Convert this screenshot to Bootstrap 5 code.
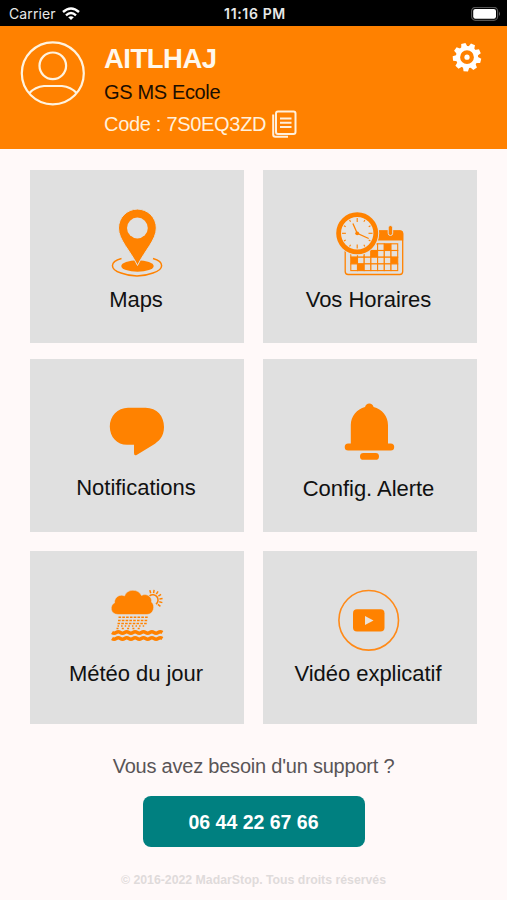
<!DOCTYPE html>
<html lang="fr">
<head>
<meta charset="utf-8">
<meta name="viewport" content="width=device-width, initial-scale=1">
<title>MadarStop</title>
<link href="https://cdn.jsdelivr.net/npm/bootstrap@5.3.0/dist/css/bootstrap.min.css" rel="stylesheet">
<style>
body{background:#fff9f9;font-family:"Liberation Sans",Arial,sans-serif;color:#111;min-height:900px;overflow:hidden}
svg{display:block;flex:none}
.status{height:26px;background:#000;color:#e8e8e8;font:14px/26px Inter,sans-serif;display:grid;grid-template-columns:1fr auto 1fr;padding:1px 6px 0 9px}
.status .carrier{letter-spacing:.1px}
.status .clock{font-weight:600;font-size:14px;letter-spacing:.65px}
.app-header{height:123px;background:#ff8100;padding:15px 25px 0 20px}
.app-header .who{margin-left:18px}
.app-header h1{font-size:27.5px;line-height:34px;font-weight:700;margin:1px 0 0;color:#fff8ec;letter-spacing:-.5px}
.school{font-size:20px;line-height:32px;color:#1c0e00;letter-spacing:-.35px}
.code{font-size:20px;line-height:32px;color:#fff0dc;letter-spacing:-.3px}
.tiles{display:grid;grid-template-columns:214px 214px;grid-template-rows:173px 173px 173px;column-gap:18.5px;row-gap:16px;padding:21px 0 0 30px}
.tile{background:#e0e0e0;padding-top:35px;color:#111}
.tile-label{font-size:22px;line-height:24px;margin-top:8px;margin-left:-2px;white-space:nowrap;letter-spacing:-.03px}
.r3{margin-top:3px;margin-bottom:-3px}
.r3 .tile-label{margin-top:1px}
.r2 .tile-label{margin-top:7px}
.help{font-size:20px;line-height:26px;color:#595557;margin-top:32px;letter-spacing:-.22px}
.phone{width:222px;height:51px;margin-top:17px;background:#008080;color:#fff;border-radius:8px;font-weight:700;font-size:19.5px;border:0;padding-top:8px}
.copyright{font-size:12.3px;line-height:16px;font-weight:700;color:#dfdbdb;margin-top:25px}
</style>
</head>
<body>
<div class="status">
  <div class="d-flex align-items-center"><span class="carrier">Carrier</span>
    <svg style="margin-left:6px" width="18" height="14" viewBox="0 0 18 14" fill="none" stroke="#fff" stroke-width="2.4"><path d="M1 5Q9-2 17 5M4 8.3Q9 3.8 14 8.3"/><path d="M9 13 6.2 10.3Q9 8 11.8 10.3Z" fill="#fff" stroke="none"/></svg>
  </div>
  <span class="clock">11:16 PM</span>
  <div class="d-flex justify-content-end align-items-center">
    <svg width="30" height="15" viewBox="0 0 30 15"><rect x=".6" y=".3" width="26" height="13" rx="3.8" fill="none" stroke="#555" stroke-width="1.2"/><rect x="2.2" y="1.9" width="22.8" height="9.8" rx="2.2" fill="#fff"/><path d="M28 4.5q2 2.3 0 4.6z" fill="#666"/></svg>
  </div>
</div>
<header class="app-header d-flex align-items-start">
  <svg width="66" height="66" viewBox="0 0 66 66" fill="none" stroke="#fff3df" stroke-width="2.2"><circle cx="32.800" cy="32.300" r="31"/><circle cx="32.800" cy="24.800" r="13.300"/><path d="M9.500 52Q15 46 24 45H42Q51 46 56.500 52"/></svg>
  <div class="who flex-grow-1">
    <h1>AITLHAJ</h1>
    <div class="school">GS MS Ecole</div>
    <div class="code d-flex align-items-center"><span>Code : 7S0EQ3ZD</span>
      <svg style="margin-left:6px" width="25" height="28" viewBox="0 0 25 28" fill="none" stroke="#fff0dc" stroke-width="2"><rect x="4" y="1.5" width="19.5" height="22.5" rx="2"/><path d="M1.2 4.5V24.500q0 2.200 2.200 2.200H16M8 8.500H19.500M8 12.700H19.500M8 16.900H19.500"/></svg>
    </div>
  </div>
  <svg id="gear" width="30" height="32" viewBox="-15 -16.200 30 32" fill="#fff"></svg>
</header>
<main>
  <div class="tiles">
    <div class="tile d-flex flex-column align-items-center">
      <svg width="80" height="75" viewBox="97 205 80 75" fill="#ff8200">
        <path d="M121.500 258.500C109 262 110 269.500 121 273Q137 279 153 273C164 269.500 165 262 153 258.500" fill="none" stroke="#ff8200" stroke-width="1.500"/>
        <ellipse cx="137.500" cy="266" rx="16.200" ry="5.800"/>
        <path d="M137.500 265.500C130 250 118.500 240 118.500 228A18.900 18.900 0 0 1 156.300 228C156.300 240 145 250 137.500 265.500Z" stroke="#e0e0e0" stroke-width="1"/>
        <circle cx="137.400" cy="228" r="10.400" fill="#e0e0e0"/>
      </svg>
      <div class="tile-label">Maps</div>
    </div>
    <div class="tile d-flex flex-column align-items-center">
      <svg width="80" height="75" viewBox="329.800 205 80 75" fill="#ff8200">
        <rect x="345" y="231" width="57.500" height="43.500" rx="3" fill="none" stroke="#ff8200" stroke-width="1.300"/>
        <path d="M365 230.500H400Q403 230.500 403 233.500V240.500H365Z"/>
        <rect x="388" y="225.500" width="4.500" height="10" rx="2.250" stroke="#e0e0e0" stroke-width="1"/>
        <g id="days"></g>
        <circle cx="357" cy="233.300" r="22" fill="#e0e0e0"/><circle cx="357" cy="233.300" r="18.600" fill="#e6e4e2" stroke="#ff8200" stroke-width="4.800"/>
        <g id="ticks" stroke="#ff8200" stroke-width="1.100"></g>
        <path d="M352.700 223.500 357 233.300 368.500 238.500" fill="none" stroke="#ff8200" stroke-width="1.300"/><circle cx="357" cy="233.300" r="1.900"/>
      </svg>
      <div class="tile-label">Vos Horaires</div>
    </div>
    <div class="tile r2 d-flex flex-column align-items-center">
      <svg width="80" height="75" viewBox="97 394 80 75" fill="#ff8200"><path d="M128 407.700H145.500C157 407.700 164 416 164 427C164 437 158.500 441.500 153 445L137 454.800Q134 456.500 134 453V444.800H127C117 444.800 109.800 437 109.800 426.500C109.800 416 117.500 407.700 128 407.700Z"/></svg>
      <div class="tile-label">Notifications</div>
    </div>
    <div class="tile r2 d-flex flex-column align-items-center">
      <svg width="80" height="75" viewBox="330 394 80 75" fill="#ff8200"><path d="M350.800 446V425C350.800 416 357 409 365 407Q366 403.500 369.300 403.500T373.600 407C382 409 388 416 388 425V446Z"/><rect x="344.700" y="443.500" width="49.500" height="7" rx="3.500"/><rect x="360" y="453" width="19" height="6.800" rx="3.400"/></svg>
      <div class="tile-label" style="margin-top:8px">Config. Alerte</div>
    </div>
    <div class="tile r3 d-flex flex-column align-items-center">
      <svg width="80" height="75" viewBox="97 586 80 75" fill="#ff8200">
        <path d="M149.500 595.800A5.300 5.300 0 1 1 156 604.200" fill="none" stroke="#ff8200" stroke-width="1.600"/>
        <g id="rays" stroke="#ff8200" stroke-width="1.500"></g>
        <path d="M118 614.500C110 614.500 109.500 605 114.500 603C114 597 120.500 593.500 124.500 596C127 588.500 138.500 588.500 141.500 595.500C147 592.500 152.500 597.500 151.500 602C155.500 605 154 614.500 147 614.500Z" stroke="#e0e0e0" stroke-width=".5"/>
        <g fill="none" stroke="#ff8200" stroke-width="1.400"><path stroke-dasharray="2.600 1.200" d="M118.500 617.300H148.500M118 620.500H148M117.500 623.500H147"/><path stroke-dasharray="1.500 2.100" d="M117.500 626H146"/><path stroke-dasharray="2 3.300" d="M116.500 628.500H143"/></g>
        <g fill="none" stroke="#ff8200" stroke-width="3.400"><path d="M112 632.500q2.100 1.400 4.200 0t4.200 0 4.200 0 4.200 0 4.200 0 4.200 0 4.200 0 4.200 0 4.200 0 4.200 0 4.200 0 4.200 0"/><path d="M112 638.500q2.100 1.400 4.200 0t4.200 0 4.200 0 4.200 0 4.200 0 4.200 0 4.200 0 4.200 0 4.200 0 4.200 0 4.200 0 4.200 0"/></g>
      </svg>
      <div class="tile-label">Météo du jour</div>
    </div>
    <div class="tile r3 d-flex flex-column align-items-center">
      <svg width="80" height="75" viewBox="330 586 80 75" fill="#ff8200"><circle cx="368.700" cy="620.300" r="29.800" fill="none" stroke="#ff8a18" stroke-width="1.600"/><rect x="353" y="609.200" width="31.500" height="22.300" rx="4"/><path d="M365 616V625L373.500 620.500Z" fill="#e9e2da"/></svg>
      <div class="tile-label" style="margin-left:-3px">Vidéo explicatif</div>
    </div>
  </div>
  <div class="d-flex flex-column align-items-center">
    <div class="help">Vous avez besoin d'un support ?</div>
    <button class="btn phone" type="button">06 44 22 67 66</button>
    <div class="copyright">© 2016-2022 MadarStop. Tous droits réservés</div>
  </div>
</main>
<script src="https://cdn.jsdelivr.net/npm/bootstrap@5.3.0/dist/js/bootstrap.bundle.min.js"></script>
<script>
// Repeated parts of the icons: gear teeth, clock ticks, sun rays, calendar days
let gear = '<circle r="9" fill="none" stroke="#fff" stroke-width="4.200"/><circle r="2.600"/>';
for (let i = 0; i < 9; i++) gear += `<path d="M-3.200-10 -2.200-14.200H2.200L3.200-10Z" transform="rotate(${i * 40 - 15})"/>`;
document.getElementById('gear').innerHTML = gear;
let ticks = '';
for (let i = 0; i < 12; i++) ticks += `<path d="M357 218V${i % 3 ? 220 : 222}" transform="rotate(${i * 30} 357 233.300)"/>`;
document.getElementById('ticks').innerHTML = ticks;
let rays = '';
for (let i = 0; i < 7; i++) rays += `<path d="M152.500 589.800V593" transform="rotate(${i * 24 - 15} 152.500 600)"/>`;
document.getElementById('rays').innerHTML = rays;
const rows = ['0000010', '0001000', '1000001', '0100000'];
let days = '';
rows.forEach((r, y) => [...r].forEach((c, x) => {
  days += `<rect x="${350.600 + x * 6.700}" y="${243.800 + y * 6.700}" width="6.700" height="6.700" fill="${c === '1' ? '#ff8200' : '#e6e1dc'}" stroke="#ff8200" stroke-width="1.100"/>`;
}));
document.getElementById('days').innerHTML = days;
</script>
</body>
</html>
